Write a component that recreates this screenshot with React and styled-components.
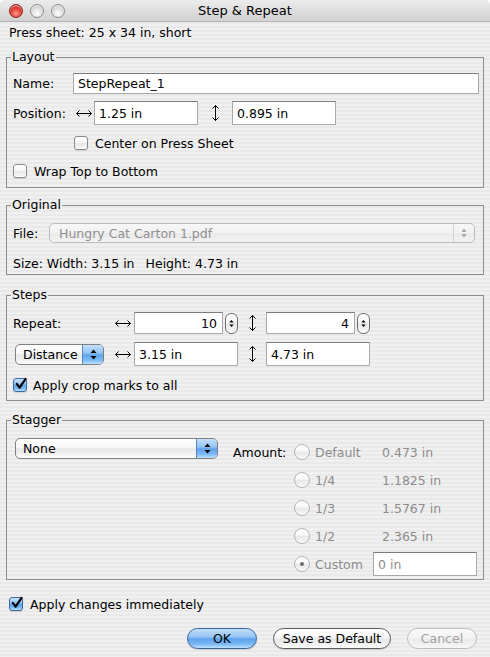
import React from 'react'
import styled, { createGlobalStyle } from 'styled-components'

const GlobalStyle = createGlobalStyle`
  html, body {
    margin: 0;
    padding: 0;
    background: #fff;
  }
  body {
    font-family: "DejaVu Sans", "Lucida Grande", sans-serif;
    font-size: 12.5px;
    color: #000;
  }
`

const glass = `linear-gradient(to bottom, #ffffff 0%, #f6f6f6 45%, #e7e7e7 52%, #f1f1f1 80%, #ffffff 100%)`
const blueGlass = `linear-gradient(to bottom, #c4e0fb 0%, #93c4f4 42%, #5fa3ec 52%, #7cb9f4 80%, #bde2ff 100%)`

const ArrowH = () => (
  <svg width="16" height="7" viewBox="0 0 16 7">
    <path d="M0.5 3.5H15.5M3.5 0.5L0.5 3.5L3.5 6.5M12.5 0.5L15.5 3.5L12.5 6.5" fill="none" stroke="#000" strokeWidth="1" />
  </svg>
)

const ArrowV = () => (
  <svg width="7" height="16" viewBox="0 0 7 16">
    <path d="M3.5 0.5V15.5M0.5 3.5L3.5 0.5L6.5 3.5M0.5 12.5L3.5 15.5L6.5 12.5" fill="none" stroke="#000" strokeWidth="1" />
  </svg>
)

const UpDown = ({ color = '#000', size = 7 }) => (
  <svg width={size} height={size + 4} viewBox="0 0 7 11">
    <path d="M3.5 0.5L6.5 4H0.5Z M0.5 7H6.5L3.5 10.5Z" fill={color} />
  </svg>
)

const Tick = () => (
  <svg width="14" height="14" viewBox="0 0 14 14">
    <path d="M2.8 6.8L5.6 10.6L11.6 1.8" fill="none" stroke="#000" strokeWidth="2.2" strokeLinecap="round" strokeLinejoin="round" />
  </svg>
)

const Window = styled.div`
  width: 490px;
  height: 657px;
  overflow: hidden;
  border-radius: 5px 5px 0 0;
  background: repeating-linear-gradient(
    to bottom,
    #f0f0f0 0,
    #f0f0f0 2px,
    #e9e9e9 2px,
    #e9e9e9 4px
  );
`

const TitleBar = styled.div`
  height: 22px;
  display: grid;
  grid-template-columns: 1fr auto 1fr;
  align-items: center;
  background: linear-gradient(to bottom, #ececec 0%, #dedede 50%, #d2d2d2 100%);
  border-bottom: 1px solid #b4b4b4;
  box-sizing: border-box;
`

const Lights = styled.div`
  display: flex;
  gap: 7px;
  padding-left: 9px;
`

const Light = styled.span`
  box-sizing: border-box;
  width: 14px;
  height: 14px;
  border-radius: 50%;
  border: 1px solid ${p => (p.$red ? '#8a2118' : '#8e8e8e')};
  background: ${p =>
    p.$red
      ? 'radial-gradient(circle at 50% 72%, #ff9b8a 0%, #e2463a 45%, #b0190f 100%)'
      : 'radial-gradient(circle at 50% 72%, #ffffff 0%, #e2e2e2 45%, #b9b9b9 100%)'};
  box-shadow: inset 0 1px 1px rgba(255, 255, 255, 0.7);
`

const Title = styled.div`
  font-size: 13px;
`

const Body = styled.div`
  padding: 0 6px;
`

const SheetInfo = styled.div`
  margin-top: 2px;
  padding-left: 3px;
  line-height: 18px;
`

const Group = styled.fieldset`
  margin: ${p => p.$mt}px 0 0;
  padding: ${p => p.$pt}px 4px ${p => p.$pb}px 6px;
  border: 1px solid #8d8d8d;
  min-width: 0;
`

const GroupTitle = styled.legend`
  margin-left: -2px;
  padding: 0 1px;
  line-height: 16px;
`

const Row = styled.div`
  display: flex;
  align-items: center;
  height: ${p => p.$h}px;
  margin-top: ${p => p.$mt || 0}px;
  padding-left: ${p => p.$indent || 0}px;
`

const Label = styled.span`
  flex: none;
  width: ${p => (p.$w ? `${p.$w}px` : 'auto')};
  color: ${p => (p.$dim ? '#8c8c8c' : '#000')};
`

const ArrowCell = styled.span`
  display: flex;
  align-items: center;
  justify-content: center;
  width: ${p => p.$w}px;
  flex: none;
`

const Field = styled.input`
  box-sizing: border-box;
  flex: none;
  width: ${p => (p.$w ? `${p.$w}px` : '100%')};
  height: ${p => p.$h || 22}px;
  margin: 0;
  padding: 0 ${p => (p.$right ? 5 : 3)}px 0 4px;
  border: 1px solid #a9a9a9;
  border-top-color: #7c7c7c;
  border-radius: 0;
  background: #fff;
  font: inherit;
  color: ${p => (p.$dim ? '#8c8c8c' : '#000')};
  text-align: ${p => (p.$right ? 'right' : 'left')};
  outline: none;
`

const Popup = styled.div`
  box-sizing: border-box;
  display: flex;
  align-items: stretch;
  width: ${p => p.$w}px;
  height: ${p => p.$h}px;
  margin-left: ${p => p.$ml || 0}px;
  border: 1px solid ${p => (p.$disabled ? '#bdbdbd' : '#7f7f7f')};
  border-radius: 5px;
  overflow: hidden;
  background: ${p =>
    p.$disabled
      ? 'linear-gradient(to bottom, #f7f7f7 0%, #f1f1f1 50%, #eaeaea 52%, #f2f2f2 100%)'
      : glass};
  color: ${p => (p.$disabled ? '#8f8f8f' : '#000')};
  flex: none;
`

const PopupText = styled.span`
  flex: 1;
  display: flex;
  align-items: center;
  padding-left: ${p => p.$pl || 7}px;
  white-space: nowrap;
`

const PopupArrows = styled.span`
  width: 20px;
  display: flex;
  align-items: center;
  justify-content: center;
  border-left: 1px solid ${p => (p.$disabled ? '#d4d4d4' : '#5a86bb')};
  background: ${p => (p.$disabled ? 'transparent' : blueGlass)};
`

const Stepper = styled.span`
  box-sizing: border-box;
  flex: none;
  width: 13px;
  height: 21px;
  margin-left: 2px;
  display: flex;
  align-items: center;
  justify-content: center;
  border: 1px solid #6e6e6e;
  border-radius: 6px;
  background: ${glass};
`

const StepperField = styled.span`
  display: flex;
  align-items: center;
`

const CheckBox = styled.span`
  box-sizing: border-box;
  flex: none;
  position: relative;
  width: 14px;
  height: 14px;
  margin-right: ${p => p.$gap || 6}px;
  border-radius: 3px;
  border: 1px solid ${p => (p.$on ? '#3b6aa6' : '#8a8a8a')};
  background: ${p => (p.$on ? blueGlass : glass)};
  box-shadow: 0 1px 1px rgba(0, 0, 0, 0.12);

  svg {
    position: absolute;
    left: 0;
    top: -2px;
  }
`

const Check = ({ on, gap, children }) => (
  <>
    <CheckBox $on={on} $gap={gap}>{on && <Tick />}</CheckBox>
    <Label>{children}</Label>
  </>
)

const StepsGrid = styled.div`
  display: grid;
  grid-template-columns: 98px 23px 104px 28px 104px;
  grid-template-rows: 22px 24px;
  row-gap: 8px;
  align-items: center;
`

const Centered = styled.span`
  display: flex;
  justify-content: center;
`

const StaggerBody = styled.div`
  display: flex;
  align-items: flex-start;
`

const AmountGrid = styled.div`
  display: grid;
  grid-template-columns: 61px 79px 104px;
  grid-auto-rows: 24px;
  row-gap: 4px;
  align-items: center;
  margin: 2px 0 0 15px;
`

const Option = styled.span`
  grid-column: 2;
  display: flex;
  align-items: center;
  color: #8c8c8c;
`

const RadioDot = styled.span`
  box-sizing: border-box;
  flex: none;
  width: 16px;
  height: 16px;
  margin-right: 5px;
  border-radius: 50%;
  border: 1px solid #b4b4b4;
  background: ${glass};
  display: flex;
  align-items: center;
  justify-content: center;

  &::after {
    content: '';
    display: ${p => (p.$on ? 'block' : 'none')};
    width: 4px;
    height: 4px;
    border-radius: 50%;
    background: #6f6f6f;
  }
`

const Value = styled.span`
  grid-column: 3;
  padding-left: 9px;
  color: #8c8c8c;
`

const Footer = styled.div`
  display: flex;
  justify-content: flex-end;
  gap: 16px;
  margin-top: 16px;
  padding-right: 7px;
`

const Button = styled.button`
  box-sizing: border-box;
  width: ${p => p.$w}px;
  height: 21px;
  margin: 0;
  padding: 0;
  border-radius: 11px;
  font: inherit;
  font-size: 12.5px;
  border: 1px solid
    ${p => (p.$kind === 'default' ? '#36649f' : p.$kind === 'disabled' ? '#bcbcbc' : '#5c5c5c')};
  background: ${p => (p.$kind === 'default' ? blueGlass : p.$kind === 'disabled' ? 'linear-gradient(to bottom, #fbfbfb, #f1f1f1 50%, #eaeaea 52%, #f6f6f6)' : glass)};
  color: ${p => (p.$kind === 'disabled' ? '#a3a3a3' : '#000')};
  box-shadow: ${p => (p.$kind === 'disabled' ? 'none' : '0 1px 1px rgba(0,0,0,0.15)')};
`

const amounts = [
  { label: 'Default', value: '0.473 in' },
  { label: '1/4', value: '1.1825 in' },
  { label: '1/3', value: '1.5767 in' },
  { label: '1/2', value: '2.365 in' },
]

export default function App() {
  return (
    <>
      <GlobalStyle />
      <Window>
        <TitleBar>
          <Lights>
            <Light $red />
            <Light />
            <Light />
          </Lights>
          <Title>Step &amp; Repeat</Title>
          <span />
        </TitleBar>

        <Body>
          <SheetInfo>Press sheet: 25 x 34 in, short</SheetInfo>

          <Group $mt={7} $pt={8} $pb={8}>
            <GroupTitle>Layout</GroupTitle>
            <Row $h={21}>
              <Label $w={60}>Name:</Label>
              <Field $h={21} style={{ flex: 1 }} defaultValue="StepRepeat_1" />
            </Row>
            <Row $h={24} $mt={7}>
              <Label $w={60}>Position:</Label>
              <ArrowCell $w={21}><ArrowH /></ArrowCell>
              <Field $w={104} $h={24} defaultValue="1.25 in" />
              <ArrowCell $w={34}><ArrowV /></ArrowCell>
              <Field $w={104} $h={24} defaultValue="0.895 in" />
            </Row>
            <Row $h={16} $mt={10} $indent={61}>
              <Check gap={7}>Center on Press Sheet</Check>
            </Row>
            <Row $h={16} $mt={12}>
              <Check gap={7}>Wrap Top to Bottom</Check>
            </Row>
          </Group>

          <Group $mt={9} $pt={10} $pb={3}>
            <GroupTitle>Original</GroupTitle>
            <Row $h={20}>
              <Label $w={36}>File:</Label>
              <Popup $w={426} $h={20} $disabled>
                <PopupText $pl={9}>Hungry Cat Carton 1.pdf</PopupText>
                <PopupArrows $disabled><UpDown color="#9a9a9a" size={6} /></PopupArrows>
              </Popup>
            </Row>
            <Row $h={16} $mt={12}>
              <Label>Size: Width: 3.15 in</Label>
              <Label style={{ marginLeft: 11 }}>Height: 4.73 in</Label>
            </Row>
          </Group>

          <Group $mt={12} $pt={9} $pb={7}>
            <GroupTitle>Steps</GroupTitle>
            <StepsGrid>
              <Label>Repeat:</Label>
              <Centered><ArrowH /></Centered>
              <StepperField>
                <Field $w={89} $h={22} $right defaultValue="10" />
                <Stepper><UpDown size={5} /></Stepper>
              </StepperField>
              <Centered><ArrowV /></Centered>
              <StepperField>
                <Field $w={89} $h={22} $right defaultValue="4" />
                <Stepper><UpDown size={5} /></Stepper>
              </StepperField>

              <Popup $w={89} $h={21} $ml={2}>
                <PopupText>Distance</PopupText>
                <PopupArrows><UpDown /></PopupArrows>
              </Popup>
              <Centered><ArrowH /></Centered>
              <Field $w={104} $h={24} defaultValue="3.15 in" />
              <Centered><ArrowV /></Centered>
              <Field $w={104} $h={24} defaultValue="4.73 in" />
            </StepsGrid>
            <Row $h={16} $mt={11}>
              <Check on gap={6}>Apply crop marks to all</Check>
            </Row>
          </Group>

          <Group $mt={11} $pt={10} $pb={3}>
            <GroupTitle>Stagger</GroupTitle>
            <StaggerBody>
              <Popup $w={203} $h={21} $ml={2}>
                <PopupText>None</PopupText>
                <PopupArrows><UpDown /></PopupArrows>
              </Popup>
              <AmountGrid>
                <Label>Amount:</Label>
                {amounts.map(a => (
                  <React.Fragment key={a.label}>
                    <Option>
                      <RadioDot />
                      {a.label}
                    </Option>
                    <Value>{a.value}</Value>
                  </React.Fragment>
                ))}
                <Option>
                  <RadioDot $on />
                  Custom
                </Option>
                <Field $w={104} $h={24} $dim style={{ gridColumn: 3 }} defaultValue="0 in" />
              </AmountGrid>
            </StaggerBody>
          </Group>

          <Row $h={16} $mt={16} $indent={3}>
            <Check on gap={7}>Apply changes immediately</Check>
          </Row>

          <Footer>
            <Button $w={70} $kind="default">OK</Button>
            <Button $w={118}>Save as Default</Button>
            <Button $w={70} $kind="disabled">Cancel</Button>
          </Footer>
        </Body>
      </Window>
    </>
  )
}
